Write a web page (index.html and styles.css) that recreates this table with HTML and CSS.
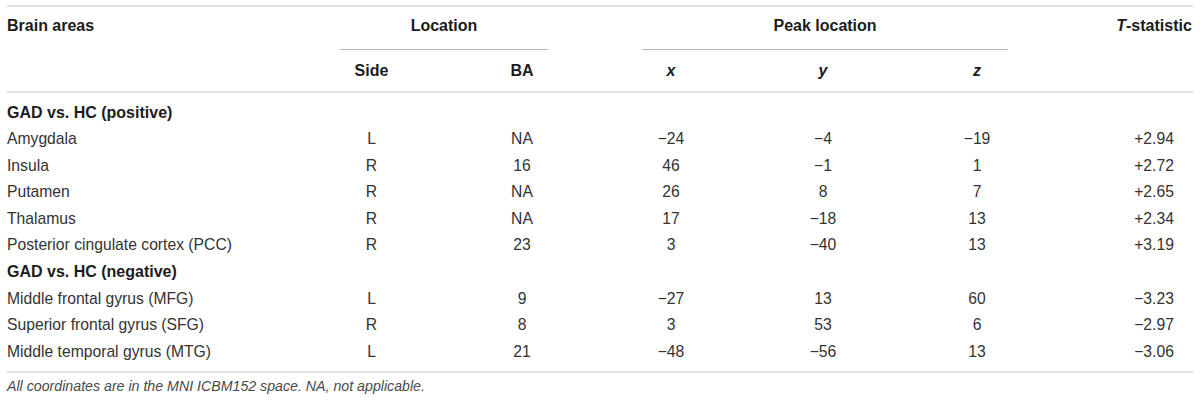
FILE: index.html
```html
<!DOCTYPE html>
<html lang="en">
<head>
<meta charset="utf-8">
<title>Brain areas table</title>
<link rel="stylesheet" href="styles.css">
</head>
<body>
<div class="wrap">
<table class="data">
  <colgroup>
    <col class="c-area"><col class="c-side"><col class="c-ba"><col class="c-x"><col class="c-y"><col class="c-z"><col class="c-t">
  </colgroup>
  <thead>
    <tr class="h1">
      <th class="left"><div class="hd">Brain areas</div></th>
      <th colspan="2"><div class="hd grp grp-loc">Location</div></th>
      <th colspan="3"><div class="hd grp grp-peak">Peak location</div></th>
      <th class="tcol"><div class="hd"><i>T</i>-statistic</div></th>
    </tr>
    <tr class="h2">
      <th></th>
      <th>Side</th>
      <th>BA</th>
      <th><i>x</i></th>
      <th><i>y</i></th>
      <th><i>z</i></th>
      <th class="tcol"></th>
    </tr>
  </thead>
  <tbody>
    <tr class="first"><td class="left sec" colspan="7">GAD vs. HC (positive)</td></tr>
    <tr><td class="left">Amygdala</td><td>L</td><td>NA</td><td>−24</td><td>−4</td><td>−19</td><td class="tcol">+2.94</td></tr>
    <tr><td class="left">Insula</td><td>R</td><td>16</td><td>46</td><td>−1</td><td>1</td><td class="tcol">+2.72</td></tr>
    <tr><td class="left">Putamen</td><td>R</td><td>NA</td><td>26</td><td>8</td><td>7</td><td class="tcol">+2.65</td></tr>
    <tr><td class="left">Thalamus</td><td>R</td><td>NA</td><td>17</td><td>−18</td><td>13</td><td class="tcol">+2.34</td></tr>
    <tr><td class="left">Posterior cingulate cortex (PCC)</td><td>R</td><td>23</td><td>3</td><td>−40</td><td>13</td><td class="tcol">+3.19</td></tr>
    <tr><td class="left sec" colspan="7">GAD vs. HC (negative)</td></tr>
    <tr><td class="left">Middle frontal gyrus (MFG)</td><td>L</td><td>9</td><td>−27</td><td>13</td><td>60</td><td class="tcol">−3.23</td></tr>
    <tr><td class="left">Superior frontal gyrus (SFG)</td><td>R</td><td>8</td><td>3</td><td>53</td><td>6</td><td class="tcol">−2.97</td></tr>
    <tr class="last"><td class="left">Middle temporal gyrus (MTG)</td><td>L</td><td>21</td><td>−48</td><td>−56</td><td>13</td><td class="tcol">−3.06</td></tr>
  </tbody>
</table>
<p class="note">All coordinates are in the MNI ICBM152 space. NA, not applicable.</p>
</div>
</body>
</html>
```

FILE: styles.css
```css
html, body {
  margin: 0;
  padding: 0;
  background: #ffffff;
}

body {
  font-family: "Liberation Sans", Arial, Helvetica, sans-serif;
  color: #333333;
}

.wrap {
  padding: 5px 7px 0 7px;
}

.data {
  width: 1186px;
  border-collapse: collapse;
  table-layout: fixed;
  border-top: 2px solid #e2e2e2;
  font-size: 16px;
  line-height: 18px;
}

.c-area { width: 289px; }
.c-side { width: 151px; }
.c-ba { width: 150px; }
.c-x { width: 148px; }
.c-y { width: 156px; }
.c-z { width: 152px; }
.c-t { width: 140px; }

th, td {
  padding: 0;
  text-align: center;
  vertical-align: top;
}

th {
  font-weight: bold;
  color: #1c1c1c;
}

.left {
  text-align: left;
}

.tcol {
  padding-left: 62px;
}

.h1 th {
  padding-top: 10px;
}

.hd {
  padding-bottom: 14px;
}

.grp {
  border-bottom: 1px solid #b9b9b9;
}

.grp-loc {
  margin: 0 49px 0 44px;
}

.grp-peak {
  margin: 0 45px;
}

.h2 th {
  padding: 12px 0 11px 0;
  border-bottom: 2px solid #e2e2e2;
}

.h2 th.tcol {
  padding-left: 62px;
}

td {
  padding-top: 4.3px;
  padding-bottom: 4.3px;
  white-space: nowrap;
  font-size: 15.7px;
}

td.sec {
  font-weight: bold;
  font-size: 16px;
  color: #1c1c1c;
}

tr.first td {
  padding-top: 10.5px;
}

tr.last td {
  padding-bottom: 10.1px;
  border-bottom: 2px solid #e2e2e2;
}

.note {
  margin: 4px 0 0 0;
  font-size: 14.2px;
  line-height: 18px;
  font-style: italic;
  color: #4a4a4a;
}
```
